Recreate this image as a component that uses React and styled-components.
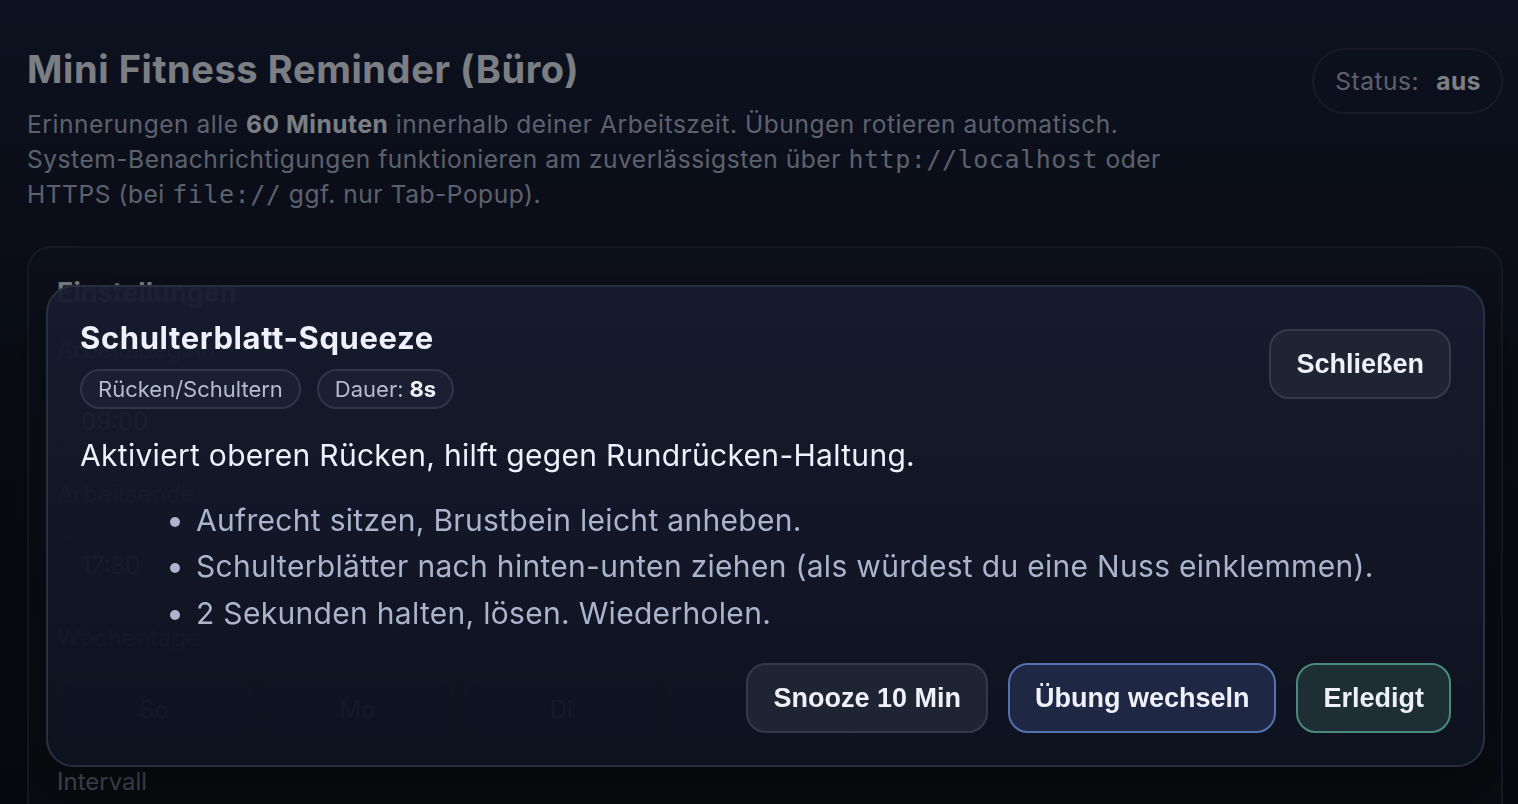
import styled, { createGlobalStyle } from "styled-components";

const GlobalStyle = createGlobalStyle`
    html, body {
        margin: 0;
        height: 100%;
        overflow: hidden;
    }
    body {
        font-family: Inter, "Noto Sans", sans-serif;
        background: linear-gradient(180deg, #18203a 0%, #121726 45%, #0f121a 100%);
        color: #dfe4ef;
    }
`;

const days = ["So", "Mo", "Di", "Mi", "Do", "Fr", "Sa"];

const steps = [
    "Aufrecht sitzen, Brustbein leicht anheben.",
    "Schulterblätter nach hinten-unten ziehen (als würdest du eine Nuss einklemmen).",
    "2 Sekunden halten, lösen. Wiederholen.",
];

const App = () => {
    return (
        <>
            <GlobalStyle />
            <Page>
                <Header>
                    <div>
                        <Title>Mini Fitness Reminder (Büro)</Title>
                        <Lead>
                            Erinnerungen alle <strong>60 Minuten</strong> innerhalb
                            deiner Arbeitszeit. Übungen rotieren automatisch.
                            <br />
                            System-Benachrichtigungen funktionieren am
                            zuverlässigsten über <Code>http://localhost</Code> oder
                            <br />
                            HTTPS (bei <Code>file://</Code> ggf. nur Tab-Popup).
                        </Lead>
                    </div>
                    <StatusPill>
                        <span>Status:</span>
                        <strong>aus</strong>
                    </StatusPill>
                </Header>

                <Card>
                    <CardTitle>Einstellungen</CardTitle>
                    <Field>
                        <Label>Arbeitsbeginn</Label>
                        <Input>09:00</Input>
                    </Field>
                    <Field>
                        <Label>Arbeitsende</Label>
                        <Input>17:30</Input>
                    </Field>
                    <Field>
                        <Label>Wochentage</Label>
                        <DayGrid>
                            {days.map((d) => (
                                <Day key={d}>{d}</Day>
                            ))}
                        </DayGrid>
                    </Field>
                    <Field>
                        <Label>Intervall</Label>
                        <Input>60 Minuten</Input>
                    </Field>
                </Card>
            </Page>

            <Backdrop />

            <Modal>
                <ModalHead>
                    <div>
                        <ExerciseName>Schulterblatt-Squeeze</ExerciseName>
                        <Chips>
                            <Chip>Rücken/Schultern</Chip>
                            <Chip>
                                Dauer: <b>8s</b>
                            </Chip>
                        </Chips>
                    </div>
                    <Button>Schließen</Button>
                </ModalHead>
                <Description>
                    Aktiviert oberen Rücken, hilft gegen Rundrücken-Haltung.
                </Description>
                <Steps>
                    {steps.map((s) => (
                        <li key={s}>{s}</li>
                    ))}
                </Steps>
                <Actions>
                    <Button>Snooze 10 Min</Button>
                    <Button $variant="primary">Übung wechseln</Button>
                    <Button $variant="done">Erledigt</Button>
                </Actions>
            </Modal>
        </>
    );
};

export default App;

const Page = styled.div`
    padding: 48px 15px 0 27px;
`;

const Header = styled.header`
    display: flex;
    justify-content: space-between;
    align-items: flex-start;
`;

const Title = styled.h1`
    margin: 0;
    font-size: 38px;
    line-height: 43px;
    letter-spacing: 0.6px;
    font-weight: 700;
    color: #e1e5ef;
`;

const Lead = styled.p`
    margin: 16px 0 0;
    font-size: 24.5px;
    line-height: 35px;
    letter-spacing: 0.55px;
    color: #a9b1c6;

    strong {
        color: #e1e5ef;
        font-weight: 700;
    }
`;

const Code = styled.code`
    font-family: "DejaVu Sans Mono", "Liberation Mono", monospace;
    font-size: 25px;
`;

const StatusPill = styled.div`
    display: flex;
    align-items: center;
    gap: 17px;
    height: 66px;
    box-sizing: border-box;
    padding: 0 20px 0 21px;
    border: 2px solid #2c3245;
    border-radius: 999px;
    font-size: 24.5px;
    letter-spacing: 0.55px;
    color: #aab0c4;

    strong {
        color: #e4e7ef;
        font-weight: 700;
    }
`;

const Card = styled.section`
    margin-top: 34px;
    padding: 29px 28px 40px;
    border: 2px solid #2a3042;
    border-radius: 24px;
    background: rgba(255, 255, 255, 0.025);
`;

const CardTitle = styled.h2`
    margin: 0 0 23px;
    font-size: 27px;
    line-height: 32px;
    font-weight: 700;
    color: #e1e5ef;
`;

const Field = styled.div`
    display: flex;
    flex-direction: column;
    gap: 24px;
    margin-bottom: 25px;
`;

const Label = styled.div`
    font-size: 24px;
    line-height: 35px;
    color: #8890a6;
`;

const Input = styled.div`
    height: 60px;
    box-sizing: border-box;
    display: flex;
    align-items: center;
    padding: 0 22px;
    border: 2px solid #2a3042;
    border-radius: 16px;
    background: rgba(255, 255, 255, 0.03);
    font-size: 24px;
    color: #dfe4ef;
`;

const DayGrid = styled.div`
    display: grid;
    grid-template-columns: repeat(7, 1fr);
    gap: 10px;
`;

const Day = styled(Input)`
    justify-content: center;
`;

const Backdrop = styled.div`
    position: fixed;
    inset: 0;
    background: rgba(0, 0, 0, 0.45);
`;

const Modal = styled.div`
    position: fixed;
    left: 46px;
    right: 33px;
    bottom: 37px;
    box-sizing: border-box;
    padding: 33px 32px 32px;
    border: 2px solid #282f42;
    border-radius: 28px;
    background: linear-gradient(
        180deg,
        rgba(23, 28, 46, 0.95) 0%,
        rgba(15, 19, 32, 0.95) 100%
    );
    box-shadow: 0 24px 60px rgba(0, 0, 0, 0.45);
`;

const ModalHead = styled.div`
    display: flex;
    justify-content: space-between;
    align-items: center;
`;

const ExerciseName = styled.h3`
    margin: 0;
    font-size: 31px;
    line-height: 36px;
    letter-spacing: 0.6px;
    font-weight: 700;
    color: #eef1fb;
`;

const Chips = styled.div`
    display: flex;
    gap: 16px;
    margin-top: 13px;
`;

const Chip = styled.span`
    display: inline-flex;
    align-items: center;
    height: 40px;
    box-sizing: border-box;
    padding: 0 16px;
    border: 2px solid #2f3648;
    border-radius: 999px;
    background: #1a2032;
    font-size: 22px;
    color: #b4bcd0;

    b {
        margin-left: 6px;
        color: #f1f3fb;
        font-weight: 700;
    }
`;

const Description = styled.p`
    margin: 26px 0 0;
    font-size: 30px;
    line-height: 40px;
    letter-spacing: 0.3px;
    color: #eef1fb;
`;

const Steps = styled.ul`
    margin: 22px 0 0;
    padding-left: 116px;
    font-size: 30px;
    line-height: 46.5px;
    letter-spacing: 0.3px;
    color: #aab4cc;
`;

const variants = {
    primary: { bg: "#1e2744", border: "#5671b0" },
    done: { bg: "#1d2e35", border: "#4a8a7c" },
    plain: { bg: "#1f2433", border: "#343a4a" },
};

const Button = styled.button`
    height: 70px;
    box-sizing: border-box;
    padding: 0 25px;
    border: 2px solid ${({ $variant }) => variants[$variant || "plain"].border};
    border-radius: 20px;
    background: ${({ $variant }) => variants[$variant || "plain"].bg};
    font-family: "Liberation Sans", Arial, sans-serif;
    font-size: 27px;
    font-weight: 700;
    color: #eef0fa;
`;

const Actions = styled.div`
    display: flex;
    justify-content: flex-end;
    gap: 20px;
    margin-top: 27px;
`;
